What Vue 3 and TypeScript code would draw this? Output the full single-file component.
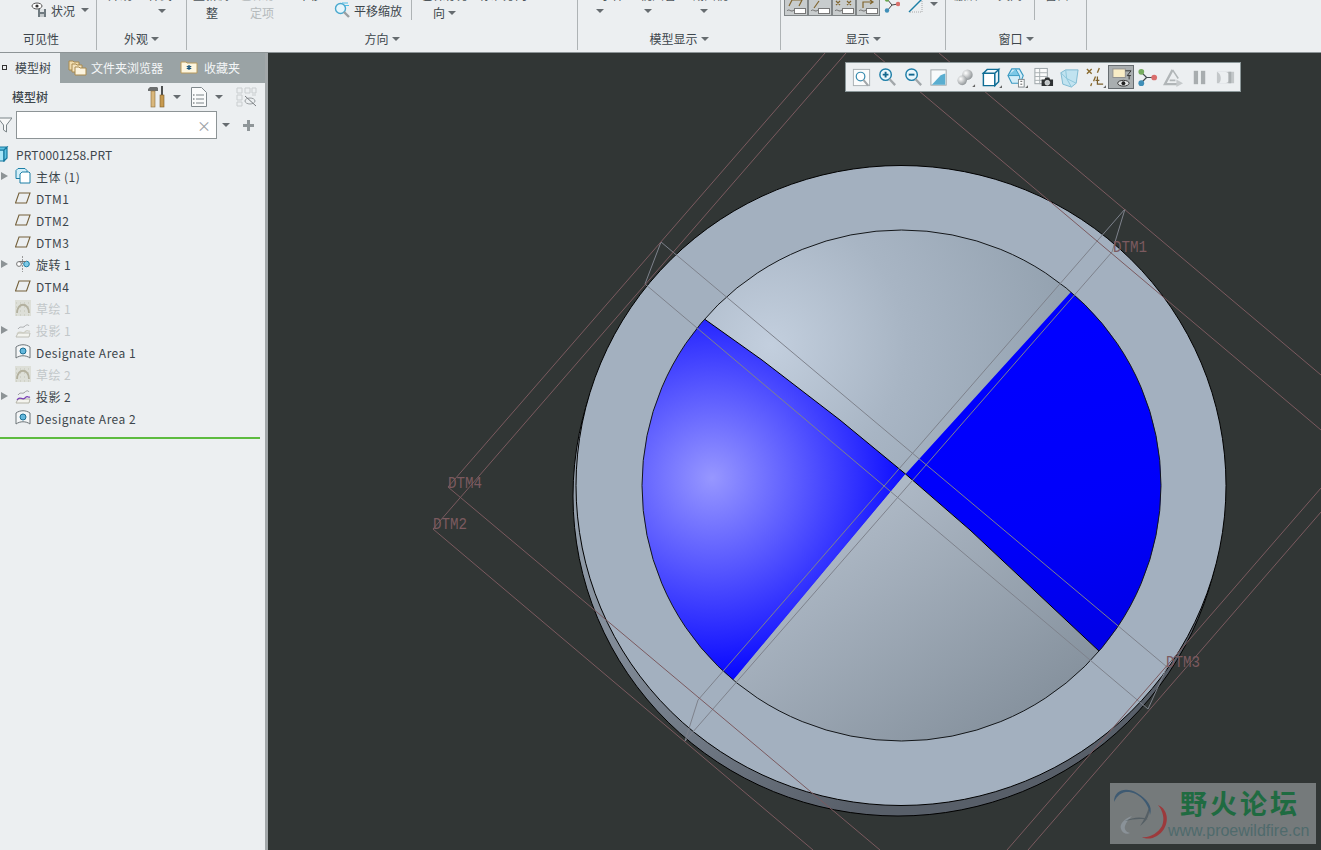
<script setup lang="ts">
interface TreeRow {
  label: string
  icon: string
  arrow?: boolean
  muted?: boolean
}

const rows: TreeRow[] = [
  { label: '主体 (1)', icon: 'body', arrow: true },
  { label: 'DTM1', icon: 'plane' },
  { label: 'DTM2', icon: 'plane' },
  { label: 'DTM3', icon: 'plane' },
  { label: '旋转 1', icon: 'revolve', arrow: true },
  { label: 'DTM4', icon: 'plane' },
  { label: '草绘 1', icon: 'sketch', muted: true },
  { label: '投影 1', icon: 'project', arrow: true, muted: true },
  { label: 'Designate Area 1', icon: 'area' },
  { label: '草绘 2', icon: 'sketch', muted: true },
  { label: '投影 2', icon: 'project', arrow: true },
  { label: 'Designate Area 2', icon: 'area' }
]

// top strokes of the four datum toggles (plane, axis, point, csys)
const datumButtons = [
  'M4 6L7 0h10l-3 6',
  'M5 8L10 1',
  'M3 1l4 4M7 1L3 5M14 1l4 4M18 1l-4 4',
  'M6 8V2h10M13 0l3 2-3 2'
]

const datumLines = [
  '825,53 448,487 880,850',
  '846,53 433,529 813,850',
  '874,53 1321,430',
  '939,53 1321,375',
  '1321,488 1007,850',
  '1321,512 1028,850'
]

const edgeLines = [
  '645,284 661,242 1167,667 1148,709 645,284',
  '1125,209 698,700 685,741 1112,252 1125,209'
]

const labels = [
  { text: 'DTM1', x: 1113, y: 252 },
  { text: 'DTM4', x: 448, y: 488 },
  { text: 'DTM2', x: 433, y: 529 },
  { text: 'DTM3', x: 1166, y: 667 }
]
</script>

<template>
  <div class="app">
    <header class="ribbon">
      <section class="group g1">
        <div class="body status">
          <svg class="ico16" viewBox="0 0 16 16">
            <ellipse cx="6" cy="4" rx="5" ry="3" fill="#fff" stroke="#555" />
            <circle cx="6" cy="4" r="1.6" fill="#333" />
            <rect x="7" y="7" width="8" height="8" fill="#6f7a80" />
            <rect x="9" y="7" width="4" height="3" fill="#dfe3e5" />
            <rect x="9" y="12" width="4" height="3" fill="#c5cacc" />
          </svg>
          <span class="txt status-txt">状况</span>
          <i class="caret status-caret"></i>
        </div>
        <div class="label label-g1">可见性</div>
      </section>

      <section class="group g2">
        <div class="body">
          <div class="sliver tops-g2"><span>外观</span><span>样式</span></div>
          <i class="caret g2-caret"></i>
        </div>
        <div class="label">外观<i class="caret"></i></div>
      </section>

      <section class="group g3">
        <div class="body cols">
          <div class="col c1">
            <div class="sliver"><span>重新调</span></div>
            <span class="txt low">整</span>
          </div>
          <div class="col c2">
            <div class="sliver gray"><span>已保存</span></div>
            <span class="txt low gray">定项</span>
          </div>
          <div class="col c3">
            <div class="sliver"><span>平移</span></div>
            <div class="pan">
              <svg class="ico16" viewBox="0 0 16 16">
                <path d="M8 1h6M11 3.500h4" stroke="#4fc0e8" fill="none" />
                <circle cx="6.500" cy="6.500" r="5" fill="#e6f5fb" stroke="#49a9cf" stroke-width="1.400" />
                <path d="M10 10l5 5" stroke="#9a9fa2" stroke-width="2.400" />
              </svg>
              <span class="txt">平移缩放</span>
            </div>
          </div>
          <div class="vsep"></div>
          <div class="col c4">
            <div class="sliver tops-c4"><span>已保存方</span><span>标准方向</span><span>上一</span><span>个</span></div>
            <div class="low dir"><span class="txt">向</span><i class="caret"></i></div>
          </div>
        </div>
        <div class="label">方向<i class="caret"></i></div>
      </section>

      <section class="group g4">
        <div class="body">
          <div class="sliver tops-g4"><span>显示样</span><span>视图管</span><span>截面视</span></div>
          <div class="g4-carets"><i class="caret"></i><i class="caret"></i><i class="caret"></i></div>
        </div>
        <div class="label">模型显示<i class="caret"></i></div>
      </section>

      <section class="group g5">
        <div class="body g5-body">
          <span class="datum-btn" v-for="top in datumButtons" :key="top">
            <svg width="22" height="15" viewBox="0 0 22 15">
              <path :d="top" stroke="#80652f" stroke-width="1.200" fill="none" />
              <path d="M2 11c2-3 4 2 7-1" stroke="#6e6e6e" fill="none" />
              <rect x="9.500" y="8.500" width="11" height="5" fill="#fff" stroke="#777" />
            </svg>
          </span>
          <svg class="ico16 g5-tree" viewBox="0 0 16 16">
            <path d="M3 2l5 6 6-1M8 8l-5 6" stroke="#444" fill="none" />
            <circle cx="3" cy="2.500" r="2.200" fill="#6aa84f" />
            <circle cx="14" cy="7" r="2.200" fill="#d9706c" />
            <circle cx="3" cy="13.500" r="2.200" fill="#3f8fb8" />
          </svg>
          <svg class="ico16 g5-plane" viewBox="0 0 16 16">
            <path d="M1 15L14 2" stroke="#1b7fa6" stroke-width="1.400" />
            <path d="M14 2v13H1" stroke="#aaa" stroke-dasharray="1 1" fill="none" />
          </svg>
          <i class="caret g5-caret"></i>
        </div>
        <div class="label">显示<i class="caret"></i></div>
      </section>

      <section class="group g6">
        <div class="body cols">
          <div class="col c6a">
            <div class="sliver tops-g6"><span>激活</span><span>关闭</span></div>
          </div>
          <div class="vsep"></div>
          <div class="col c6b">
            <div class="sliver"><span>窗口</span></div>
          </div>
        </div>
        <div class="label">窗口<i class="caret"></i></div>
      </section>
    </header>

    <div class="main">
      <aside class="side">
        <nav class="tabs">
          <div class="tab active">
            <i class="pin"></i>
            <span>模型树</span>
          </div>
          <div class="tab folder-tab">
            <svg class="ico20" viewBox="0 0 20 18">
              <path d="M1 3h4l1 1h5v8H1z" fill="#f0dcae" stroke="#a98a4e" />
              <path d="M4 6h4l1 1h5v7H4z" fill="#f4e4bf" stroke="#a98a4e" />
              <path d="M7 9h4l1 1h6v7H7z" fill="#fbf3de" stroke="#a98a4e" />
            </svg>
            <span>文件夹浏览器</span>
          </div>
          <div class="tab fav-tab">
            <svg class="ico18" viewBox="0 0 18 14">
              <path d="M1 2h5l1 1h10v10H1z" fill="#fdf6df" stroke="#b89a5c" />
              <path d="M9 5v5M6.800 6.200l4.400 2.600M11.200 6.200l-4.400 2.600" stroke="#14527a" stroke-width="1.200" />
            </svg>
            <span>收藏夹</span>
          </div>
        </nav>

        <div class="tree-head">
          <span class="tree-title">模型树</span>
          <svg class="tool-hammer" width="18" height="22" viewBox="0 0 18 22">
            <path d="M0 3l2-2h7l1 1v3H0z" fill="#6c6f70" />
            <rect x="3" y="5" width="4" height="16" fill="#d9b77c" stroke="#8a6b3a" stroke-width=".6" />
            <rect x="13" y="0" width="2" height="9" fill="#4d5051" />
            <rect x="12" y="9" width="4" height="12" fill="#c79a4f" stroke="#7c5c2a" stroke-width=".6" />
          </svg>
          <i class="caret head-caret1"></i>
          <svg class="tool-list" width="16" height="22" viewBox="0 0 16 22">
            <path d="M.5 1.500h10l5 5v14H.5z" fill="#fafbfb" stroke="#80888c" />
            <path d="M5 9h8M5 13h8M5 17h8" stroke="#7d8589" />
            <path d="M2 9h1.500M2 13h1.500M2 17h1.500" stroke="#4d5559" />
          </svg>
          <i class="caret head-caret2"></i>
          <svg class="tool-off" width="21" height="20" viewBox="0 0 21 20">
            <path d="M1 1h5v5H1zM1 8h5v5H1zM1 15h5v4H1zM9 1h5v5H9zM16 1h4v5h-4zM16 8h4" stroke="#c9cdcf" fill="none" />
            <ellipse cx="14" cy="14" rx="5" ry="3" fill="none" stroke="#9a9fa2" />
            <path d="M9 9l11 10" stroke="#777c7f" />
          </svg>
        </div>

        <div class="search">
          <svg class="funnel" width="14" height="16" viewBox="0 0 14 16">
            <path d="M0 1h14L8.500 8v7L5.500 13V8z" fill="#f6f7f7" stroke="#7b8488" />
          </svg>
          <div class="search-box"><span>×</span></div>
          <i class="caret search-caret"></i>
          <span class="plus"></span>
        </div>

        <div class="tree">
          <div class="row part">
            <svg class="tree-ico" width="16" height="16" viewBox="0 0 16 16">
              <path d="M1 4h10v11H1z" fill="#a9e6f8" stroke="#17799f" stroke-width="1.200" />
              <path d="M1 4l3-3h10l-3 3zM11 4l3-3v11l-3 3z" fill="#5fc2e2" stroke="#17799f" stroke-width="1.200" />
            </svg>
            <span>PRT0001258.PRT</span>
          </div>
          <div v-for="row in rows" :key="row.label" class="row" :class="{ muted: row.muted }">
            <i class="expander" :class="{ on: row.arrow }"></i>
            <svg class="tree-ico" width="16" height="16" viewBox="0 0 16 16">
              <template v-if="row.icon === 'body'">
                <path d="M1 2.500l2-2h7l2 2v8H1z" fill="#d2eef8" stroke="#1b7fa6" />
                <path d="M5 6l2-2h7l1 1v10H5z" fill="#fff" stroke="#1b7fa6" />
              </template>
              <path v-else-if="row.icon === 'plane'" d="M.5 13L4 3h11l-3.500 10z" fill="none" stroke="#74603a" stroke-width="1.100" />
              <template v-else-if="row.icon === 'revolve'">
                <path d="M7.500 0v16" stroke="#999" stroke-dasharray="2 1" />
                <circle cx="4" cy="8" r="2.400" fill="#fff" stroke="#777" />
                <circle cx="11.500" cy="8" r="2.800" fill="#7fcbe8" stroke="#1b7fa6" />
                <path d="M4 5.500h7" stroke="#777" />
              </template>
              <template v-else-if="row.icon === 'sketch'">
                <rect width="16" height="16" fill="#dadcd3" />
                <path d="M1 15h14M1 11h14M1 7h14M1 3h14" stroke="#b9b9a8" stroke-dasharray="1 3" />
                <path d="M2 13c0-11 12-11 12 0" fill="none" stroke="#a5a18a" stroke-width="1.800" />
              </template>
              <template v-else-if="row.icon === 'project'">
                <path d="M1 15l2-4h12l-1 4z" fill="#f4f4ee" stroke="#b4b4a8" />
                <path d="M2 12c3-5 5 1 8-2s3 0 5-1" fill="none" :stroke="row.muted ? '#c7c7b9' : '#7a3fb5'" stroke-width="1.200" />
                <path d="M3 7c3-4 4 0 7-3 1-1 3-2 4 0" fill="none" stroke="#9a9c9e" />
              </template>
              <template v-else>
                <path d="M1 3c4-3 10-3 14 0v11c-4-3-10-3-14 0z" fill="#f4f6f7" stroke="#6d7478" />
                <circle cx="8" cy="7" r="3" fill="#63b7dc" stroke="#1b6f94" />
              </template>
            </svg>
            <span>{{ row.label }}</span>
          </div>
        </div>
        <div class="tree-end"></div>
      </aside>

      <main class="viewport">
        <svg class="scene" viewBox="268 53 1053 797" width="1053" height="797">
          <defs>
            <clipPath id="inner">
              <ellipse cx="901.500" cy="485.500" rx="259.500" ry="255.500" />
            </clipPath>
            <linearGradient id="rim" gradientUnits="userSpaceOnUse" x1="600" y1="480" x2="850" y2="820">
              <stop offset="0" stop-color="#95a0ad" />
              <stop offset=".6" stop-color="#717a86" />
              <stop offset="1" stop-color="#585f69" />
            </linearGradient>
            <radialGradient id="domeTop" gradientUnits="userSpaceOnUse" cx="770" cy="345" r="300">
              <stop offset="0" stop-color="#c3cfde" />
              <stop offset=".45" stop-color="#a8b5c4" />
              <stop offset="1" stop-color="#94a2b0" />
            </radialGradient>
            <linearGradient id="domeLow" gradientUnits="userSpaceOnUse" x1="880" y1="500" x2="1040" y2="730">
              <stop offset="0" stop-color="#adb8c5" />
              <stop offset="1" stop-color="#838f9b" />
            </linearGradient>
            <radialGradient id="blueGlow" gradientUnits="userSpaceOnUse" cx="712" cy="478" r="205">
              <stop offset="0" stop-color="#9797ff" />
              <stop offset=".45" stop-color="#5656ff" />
              <stop offset="1" stop-color="#0404ff" />
            </radialGradient>
            <linearGradient id="blueFlat" gradientUnits="userSpaceOnUse" x1="1000" y1="350" x2="1080" y2="640">
              <stop offset="0" stop-color="#0000ff" />
              <stop offset=".6" stop-color="#0000fa" />
              <stop offset="1" stop-color="#0000e8" />
            </linearGradient>
          </defs>

          <ellipse cx="898" cy="496" rx="325" ry="320" fill="url(#rim)" stroke="#000" />
          <ellipse cx="901" cy="485.500" rx="325" ry="320" fill="#a3b0bf" stroke="#000" />

          <g clip-path="url(#inner)">
            <ellipse cx="901.500" cy="485.500" rx="259.500" ry="255.500" fill="url(#domeTop)" />
            <path d="M905.500 474L840 420 762 360 703 318 650 280 500 300 500 760 700 720 735 678z" fill="url(#blueGlow)" />
            <path d="M905.500 474L1070 293 1110 247 1400 247 1400 700 1130 680 1100 652 970 530z" fill="url(#blueFlat)" />
            <path d="M905.500 474L735 678 700 720 700 900 1130 900 1130 680 1100 652 970 530z" fill="url(#domeLow)" />
            <polyline points="650,280 703,318 762,360 840,420 905.500,474 970,530 1100,652" fill="none" stroke="#000" />
          </g>
          <ellipse cx="901.500" cy="485.500" rx="259.500" ry="255.500" fill="none" stroke="#14171a" />

          <polyline v-for="line in edgeLines" :key="line" :points="line" class="edge" />
          <polyline v-for="line in datumLines" :key="line" :points="line" class="datum" />
          <text
            v-for="item in labels"
            :key="item.text"
            :x="item.x"
            :y="item.y"
            class="datum-label"
            textLength="34"
            lengthAdjust="spacingAndGlyphs"
          >{{ item.text }}</text>
        </svg>

        <div class="view-bar">
          <span class="vb">
            <svg viewBox="0 0 22 22">
              <rect x="2.500" y="2.500" width="17" height="17" fill="#fbfcfc" stroke="#a9b0b3" />
              <circle cx="10" cy="10" r="4.500" fill="#fff" stroke="#3a8db0" stroke-width="1.300" />
              <path d="M13 13.500l5 6" stroke="#a2a7aa" stroke-width="2.200" />
            </svg>
          </span>
          <span class="vb">
            <svg viewBox="0 0 22 22">
              <circle cx="9" cy="8" r="6" fill="#eaf6fb" stroke="#1d7ea8" stroke-width="1.500" />
              <path d="M6 8h6M9 5v6" stroke="#14688f" stroke-width="2" />
              <path d="M13 12.500l6 6.500" stroke="#a2a7aa" stroke-width="2.400" />
            </svg>
          </span>
          <span class="vb">
            <svg viewBox="0 0 22 22">
              <circle cx="9" cy="8" r="6" fill="#eaf6fb" stroke="#1d7ea8" stroke-width="1.500" />
              <path d="M6 8h6" stroke="#14688f" stroke-width="2" />
              <path d="M13 12.500l6 6.500" stroke="#a2a7aa" stroke-width="2.400" />
            </svg>
          </span>
          <span class="vb">
            <svg viewBox="0 0 22 22">
              <rect x="2" y="3" width="16" height="16" fill="#f7fafb" stroke="#9ea5a8" />
              <path d="M3 18.500L12 9c2-1.500 4-2 5-2v11.500z" fill="#5aaed0" />
            </svg>
          </span>
          <span class="vb">
            <svg viewBox="0 0 22 22">
              <defs>
                <radialGradient id="ball" cx=".35" cy=".35" r=".8">
                  <stop offset="0" stop-color="#fff" />
                  <stop offset="1" stop-color="#7e8487" />
                </radialGradient>
              </defs>
              <circle cx="13" cy="8" r="5.500" fill="url(#ball)" />
              <circle cx="7.500" cy="14" r="5" fill="url(#ball)" />
              <path d="M21 18v3h-3z" fill="#666" />
            </svg>
          </span>
          <span class="vb">
            <svg viewBox="0 0 22 22">
              <path d="M2.500 6.500h12v13h-12z" fill="#fff" stroke="#0f6d95" stroke-width="1.500" />
              <path d="M2.500 6.500l4-4h12l-4 4zM14.500 6.500l4-4v13l-4 4z" fill="#eef7fb" stroke="#0f6d95" stroke-width="1.500" />
              <path d="M22 19v3h-3z" fill="#666" />
            </svg>
          </span>
          <span class="vb">
            <svg viewBox="0 0 22 22">
              <path d="M1 9l4-7h8l4 7-3 8H5z" fill="#d3edf8" stroke="#3b9ac2" stroke-width="1.200" />
              <path d="M9 2l4 7H1M13 9l1 8" fill="#7cc8e6" stroke="#3b9ac2" />
              <rect x="12" y="13" width="6" height="8" fill="#fff" stroke="#7f878b" />
              <path d="M14 15h2M14 18h2" stroke="#555" />
              <path d="M22 19v3h-3z" fill="#666" />
            </svg>
          </span>
          <span class="vb">
            <svg viewBox="0 0 22 22">
              <rect x="2" y="1.500" width="13" height="16" fill="#fafbfb" stroke="#9aa2a6" />
              <path d="M2 6h13M2 10h13M2 14h13M7 2v16" stroke="#a8afb2" />
              <path d="M9 13h3l1-2h4l1 2h3v7H9z" fill="#2f3233" />
              <circle cx="15" cy="16.500" r="2.500" fill="#bfc4c6" stroke="#fff" stroke-width=".6" />
            </svg>
          </span>
          <span class="vb">
            <svg viewBox="0 0 22 22">
              <path d="M2 6l5-3h13l-2 14-5 4-9-3z" fill="#c1e3f0" stroke="#7db9d1" />
              <path d="M7 3l1 9 10 5M8 12l-6-6M8 12l5 9" fill="none" stroke="#8cc5da" />
            </svg>
          </span>
          <span class="vb">
            <svg viewBox="0 0 22 22">
              <path d="M2 2l5 5M7 2L2 7" stroke="#8a6b2f" stroke-width="1.400" />
              <path d="M15 1l-2 5M11 10l-2 5M7 17l-1 3" stroke="#8a6b2f" stroke-width="1.400" />
              <path d="M13 10v8h6M11 14h4" stroke="#7a5f2a" stroke-width="1.300" fill="none" />
              <path d="M22 19v3h-3z" fill="#666" />
            </svg>
          </span>
          <span class="vb toggled">
            <svg viewBox="0 0 22 22">
              <rect x="2" y="2" width="13" height="9" fill="#f8ecc6" stroke="#8f8f8f" />
              <path d="M15 4h6l-4 5h4M19 9v4" stroke="#333" fill="none" />
              <ellipse cx="13" cy="17" rx="6" ry="3" fill="#e4e6e7" stroke="#333" />
              <circle cx="13" cy="17" r="2" fill="#222" />
            </svg>
          </span>
          <span class="vb">
            <svg viewBox="0 0 22 22">
              <path d="M4 5l6 6h8M10 11l-6 6" stroke="#41494d" stroke-width="1.200" fill="none" />
              <circle cx="4.500" cy="5" r="3" fill="#75ab5e" />
              <circle cx="18" cy="11" r="3" fill="#d96d6c" />
              <circle cx="4.500" cy="17" r="3" fill="#3f8fb8" />
            </svg>
          </span>
          <span class="vb">
            <svg viewBox="0 0 22 22">
              <path d="M10 3L2 18h13" fill="none" stroke="#b1b6b8" stroke-width="2.400" />
              <path d="M10 3l6 9M7 14h6" fill="none" stroke="#b1b6b8" stroke-width="1.600" />
              <path d="M14 13l7 4-7 4z" fill="#c5c9cb" />
            </svg>
          </span>
          <span class="vb">
            <svg viewBox="0 0 22 22">
              <rect x="5" y="4" width="4.500" height="14" fill="#a8adaf" />
              <rect x="12.500" y="4" width="4.500" height="14" fill="#a8adaf" />
            </svg>
          </span>
          <span class="vb">
            <svg viewBox="0 0 22 22">
              <rect x="2" y="5" width="18" height="12" fill="#c3c7c9" />
              <path d="M2 5h8a6 6 0 0 1 0 12H4c3-2 3-10-2-12z" fill="#eceff1" />
              <rect x="14" y="5" width="3" height="12" fill="#a9aeb0" />
            </svg>
          </span>
        </div>

        <div class="mark">
          <svg class="mark-logo" width="60" height="58" viewBox="0 0 60 58">
            <path d="M3 17C3 4 16 2 26 8c10 6 16 13 13 22C38 17 26 6 15 7 8 8 5 13 3 17z" fill="#3e5a72" />
            <path d="M47 20c8 3 12 14 6 24-5 8-15 12-22 8 8 1 16-4 20-11 3-7 1-15-4-21z" fill="#9c3a3c" />
            <path d="M21 31c-7 2-13 8-11 13 1 4 6 6 9 4-4-1-6-4-5-7 1-4 4-7 7-10z" fill="#8a9298" />
            <path d="M14 36c8-4 18-5 23-1-6-2-15-1-23 1zM38 22c1 8-2 14-9 19 4-6 7-12 9-19z" fill="#555f65" />
          </svg>
          <div class="mark-text">
            <span class="mark-cn">野火论坛</span>
            <span class="mark-url">www.proewildfire.cn</span>
          </div>
        </div>
      </main>
    </div>
  </div>
</template>

<style>
html,
body {
  margin: 0;
  overflow: hidden;
}
</style>

<style scoped>
.app {
  width: 1321px;
  height: 850px;
  display: flex;
  flex-direction: column;
  overflow: hidden;
  font-family: "Noto Sans CJK SC", "Liberation Sans", sans-serif;
  font-size: 12px;
  color: #3d464c;
  background: #eceff1;
}

.ribbon {
  height: 52px;
  flex: none;
  display: flex;
  background: #eceff1;
  border-bottom: 1px solid #8d9496;
}

.group {
  height: 50px;
  display: flex;
  flex-direction: column;
  flex: none;
  box-sizing: border-box;
  border-right: 1px solid #aeb3b5;
}

.g1 { width: 97px; }
.g2 { width: 90px; }
.g3 { width: 391px; }
.g4 { width: 203px; }
.g5 { width: 165px; }
.g6 { width: 141px; }

.body {
  height: 28px;
  overflow: hidden;
}

.cols {
  display: flex;
}

.label {
  height: 22px;
  display: flex;
  align-items: center;
  justify-content: center;
  line-height: 22px;
  color: #3d464c;
}

.label-g1 {
  padding-right: 14px;
}

.label .caret {
  margin-left: 3px;
}

.caret {
  display: inline-block;
  flex: none;
  width: 0;
  height: 0;
  border-left: 4px solid transparent;
  border-right: 4px solid transparent;
  border-top: 4px solid #666c70;
}

.sliver {
  height: 2px;
  overflow: hidden;
  display: flex;
}

.sliver span {
  display: block;
  line-height: 14px;
  margin-top: -12px;
  color: #4e565b;
  flex: none;
}

.sliver.gray span {
  color: #bcc1c3;
}

.status {
  display: flex;
  align-items: center;
  height: 16px;
  margin-top: 2px;
  margin-bottom: 10px;
  padding-left: 31px;
}

.ico16 {
  width: 16px;
  height: 16px;
  flex: none;
}

.status-txt {
  margin-left: 4px;
}

.status-caret {
  margin-left: 6px;
}

.tops-g2 {
  padding-left: 11px;
  gap: 16px;
}

.g2-caret {
  display: block;
  margin: 7px 0 0 61px;
}

.col {
  display: flex;
  flex-direction: column;
  flex: none;
}

.vsep {
  width: 1px;
  height: 20px;
  flex: none;
  background: #aeb3b5;
}

.c1 { width: 48px; }
.c2 { width: 57px; }
.c3 { width: 119px; }
.c4 { width: 165px; }

.c1 .sliver { padding-left: 6px; }
.c1 .low { margin-left: 19px; }
.c2 .sliver { padding-left: 5px; }
.c2 .low { margin-left: 15px; }
.c3 .sliver { padding-left: 6px; }

.low {
  margin-top: 4px;
  line-height: 14px;
}

.txt.gray {
  color: #b5babc;
}

.pan {
  display: flex;
  align-items: center;
  gap: 4px;
  height: 16px;
  padding-left: 42px;
}

.tops-c4 {
  padding-left: 9px;
  gap: 10px;
}

.dir {
  display: flex;
  align-items: center;
  gap: 3px;
  margin-left: 21px;
}

.tops-g4 {
  padding-left: 10px;
  gap: 16px;
}

.g4-carets {
  display: flex;
  margin: 7px 0 0 18px;
}

.g4-carets .caret:nth-child(2) {
  margin-left: 40px;
}

.g4-carets .caret:nth-child(3) {
  margin-left: 48px;
}

.g5-body {
  display: flex;
  align-items: flex-start;
  padding-left: 3px;
}

.datum-btn {
  width: 24px;
  height: 16px;
  box-sizing: border-box;
  flex: none;
  display: flex;
  align-items: center;
  justify-content: center;
  background: #c8cccd;
  border: 1px solid #808587;
  border-top: none;
}

.g5-tree {
  margin: -3px 0 0 4px;
}

.g5-plane {
  margin: -3px 0 0 8px;
}

.g5-caret {
  margin: 2px 0 0 6px;
}

.c6a { width: 88px; }
.c6b { width: 50px; }

.tops-g6 {
  padding-left: 8px;
  gap: 20px;
}

.c6b .sliver {
  padding-left: 10px;
}

.main {
  flex: 1;
  min-height: 0;
  display: flex;
}

.side {
  width: 265px;
  flex: none;
  box-sizing: content-box;
  border-right: 3px solid #a2a7a9;
  background: #eceff1;
  display: flex;
  flex-direction: column;
}

.tabs {
  height: 30px;
  flex: none;
  display: flex;
  background: #9aa3a5;
}

.tab {
  display: flex;
  align-items: center;
  color: #f4f6f7;
  padding-bottom: 2px;
  box-sizing: border-box;
}

.tab.active {
  width: 60px;
  flex: none;
  background: #eceff1;
  color: #3d464c;
}

.pin {
  width: 3px;
  height: 3px;
  margin: 0 8px 0 2px;
  border: 1px solid #333;
  flex: none;
}

.folder-tab {
  margin-left: 8px;
}

.ico20 {
  width: 20px;
  height: 18px;
  margin-right: 3px;
}

.fav-tab {
  margin-left: 17px;
}

.ico18 {
  width: 18px;
  height: 14px;
  margin-right: 6px;
}

.tree-head {
  height: 27px;
  flex: none;
  display: flex;
  align-items: center;
  padding-left: 12px;
}

.tree-title {
  width: 136px;
  flex: none;
  font-weight: 500;
}

.head-caret1 {
  margin-left: 7px;
}

.tool-list {
  margin-left: 10px;
}

.head-caret2 {
  margin-left: 8px;
}

.tool-off {
  margin-left: 13px;
}

.search {
  height: 30px;
  flex: none;
  display: flex;
  align-items: center;
}

.funnel {
  margin-left: -2px;
  margin-right: 4px;
  flex: none;
}

.search-box {
  width: 201px;
  height: 28px;
  box-sizing: border-box;
  flex: none;
  display: flex;
  align-items: center;
  justify-content: flex-end;
  padding-right: 5px;
  background: #fff;
  border: 1px solid #8d9496;
  color: #9aa0a3;
  font-size: 14px;
}

.search-caret {
  margin-left: 5px;
}

.plus {
  width: 11px;
  height: 11px;
  margin-left: 13px;
  flex: none;
  background:
    linear-gradient(#8f9699, #8f9699) center / 11px 3px no-repeat,
    linear-gradient(#8f9699, #8f9699) center / 3px 11px no-repeat;
}

.tree {
  padding-top: 3px;
  flex: none;
}

.row {
  height: 22px;
  display: flex;
  align-items: center;
  letter-spacing: .47px;
  white-space: nowrap;
}

.row.part {
  letter-spacing: .14px;
}

.row .tree-ico {
  flex: none;
  margin-right: 5px;
}

.row.part .tree-ico {
  margin-left: -7px;
  margin-right: 7px;
}

.row.muted {
  color: #c2c7c9;
}

.row.muted .tree-ico {
  opacity: .8;
}

.expander {
  width: 15px;
  height: 8px;
  flex: none;
  box-sizing: border-box;
}

.expander.on {
  width: 0;
  height: 0;
  margin-right: 7px;
  margin-left: 1px;
  border-left: 7px solid #8d9396;
  border-top: 4px solid transparent;
  border-bottom: 4px solid transparent;
}

.tree-end {
  width: 260px;
  height: 2px;
  margin-top: 8px;
  background: #5dbb3f;
}

.viewport {
  position: relative;
  flex: 1;
  background: #313635;
  overflow: hidden;
}

.scene {
  display: block;
}

.edge {
  fill: none;
  stroke: #7e828c;
  stroke-width: 1;
}

.datum {
  fill: none;
  stroke: #7b5a5f;
  stroke-width: 1;
}

.datum-label {
  font-family: "Liberation Mono", monospace;
  font-size: 16px;
  fill: #7b5a5f;
}

.view-bar {
  position: absolute;
  left: 577px;
  top: 9px;
  height: 30px;
  box-sizing: border-box;
  display: flex;
  align-items: center;
  padding-left: 2px;
  padding-right: 2px;
  background: #eceff1;
  border: 1px solid #8b9799;
}

.vb {
  width: 26px;
  height: 24px;
  box-sizing: border-box;
  flex: none;
  display: flex;
  align-items: center;
  justify-content: center;
}

.vb svg {
  width: 21px;
  height: 21px;
}

.vb.toggled {
  background: #a9aeb0;
  border: 1px solid #666c70;
}

.mark {
  position: absolute;
  left: 842px;
  top: 730px;
  width: 206px;
  height: 61px;
  display: flex;
  background: #757a7b;
}

.mark-logo {
  flex: none;
  margin: 2px 0 0 1px;
}

.mark-text {
  display: flex;
  flex-direction: column;
  white-space: nowrap;
}

.mark-cn {
  margin: 5px 0 0 9px;
  font-size: 27px;
  line-height: 30px;
  font-weight: 700;
  letter-spacing: 3px;
  color: #1f6b41;
}

.mark-url {
  margin: 4px 0 0 -3px;
  font-family: "Liberation Sans", sans-serif;
  font-size: 16px;
  line-height: 18px;
  color: #4f6a6c;
}
</style>
